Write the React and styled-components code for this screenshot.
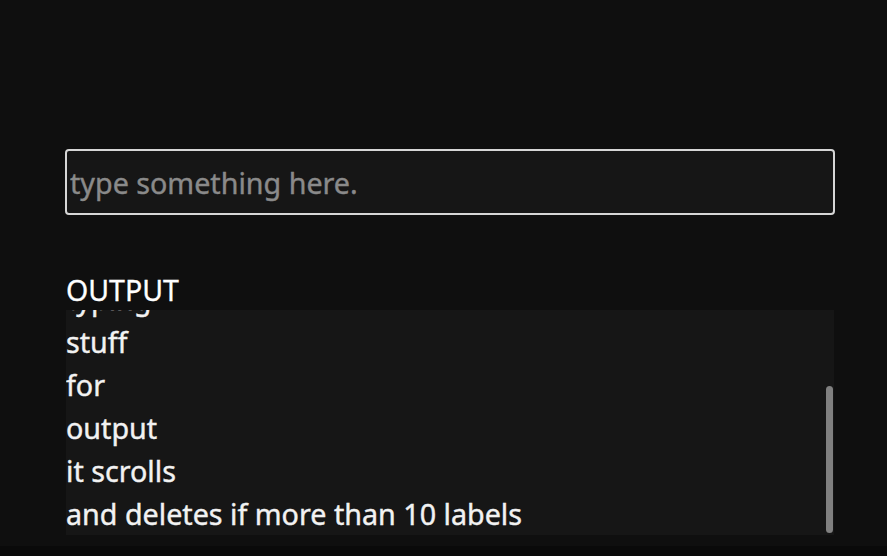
import React, { useLayoutEffect, useRef, useState } from "react";
import styled, { createGlobalStyle } from "styled-components";

const GlobalStyle = createGlobalStyle`
  html, body {
    margin: 0;
    padding: 0;
    background-color: #0a0a0a;
  }
  body {
    font-family: "Noto Sans", "Open Sans", sans-serif;
  }
`;

const Screen = styled.div`
  height: 546px;
  background-color: #0f0f0f;
  padding: 149px 52px 0 65px;
  box-sizing: border-box;
  display: flex;
  flex-direction: column;
`;

const TextInput = styled.input`
  height: 66px;
  box-sizing: border-box;
  width: 100%;
  padding: 0 3px;
  background-color: #161616;
  border: 2px solid #d6d6d6;
  border-radius: 4px;
  color: #e8e8e8;
  font-family: inherit;
  font-size: 28.7px;
  -webkit-text-stroke: 0.4px #8a8a8a;
  outline: none;
  caret-color: #ffffff;

  &::placeholder {
    color: #8a8a8a;
  }
`;

const OutputTitle = styled.div`
  margin-top: 56px;
  padding-left: 1px;
  color: #ffffff;
  font-size: 28.5px;
  -webkit-text-stroke: 0.3px #ffffff;
  line-height: 39px;
`;

const PanelFrame = styled.div`
  position: relative;
  margin: 0 1px;
  height: 225px;
  background-color: #161616;
`;

const OutputScroll = styled.div`
  height: 100%;
  overflow-y: scroll;
  scrollbar-width: none;

  &::-webkit-scrollbar {
    display: none;
  }
`;

const ScrollThumb = styled.div`
  position: absolute;
  right: 1px;
  width: 7px;
  border-radius: 4px;
  background-color: #808080;
`;

const OutputLine = styled.div`
  color: #f2f2f2;
  font-size: 28.7px;
  -webkit-text-stroke: 0.4px #f2f2f2;
  line-height: 43px;
  white-space: nowrap;
`;

const lines = [
  "this",
  "is",
  "typing",
  "stuff",
  "for",
  "output",
  "it scrolls",
  "and deletes if more than 10 labels",
];

const App = () => {
  const scrollRef = useRef(null);
  const [thumb, setThumb] = useState({ top: 0, height: 0 });

  useLayoutEffect(() => {
    const el = scrollRef.current;
    if (!el) return;
    el.scrollTop = el.scrollHeight;
    const ratio = el.clientHeight / el.scrollHeight;
    const height = Math.round(el.clientHeight * ratio);
    const top = Math.round((el.scrollTop / el.scrollHeight) * el.clientHeight);
    setThumb({ top: top - 2, height });
  }, []);

  return (
    <>
      <GlobalStyle />
      <Screen>
        <TextInput type="text" placeholder="type something here." autoFocus />
        <OutputTitle>OUTPUT</OutputTitle>
        <PanelFrame>
          <OutputScroll ref={scrollRef}>
            {lines.map((line) => (
              <OutputLine key={line}>{line}</OutputLine>
            ))}
          </OutputScroll>
          <ScrollThumb style={{ top: thumb.top, height: thumb.height }} />
        </PanelFrame>
      </Screen>
    </>
  );
};

export default App;
